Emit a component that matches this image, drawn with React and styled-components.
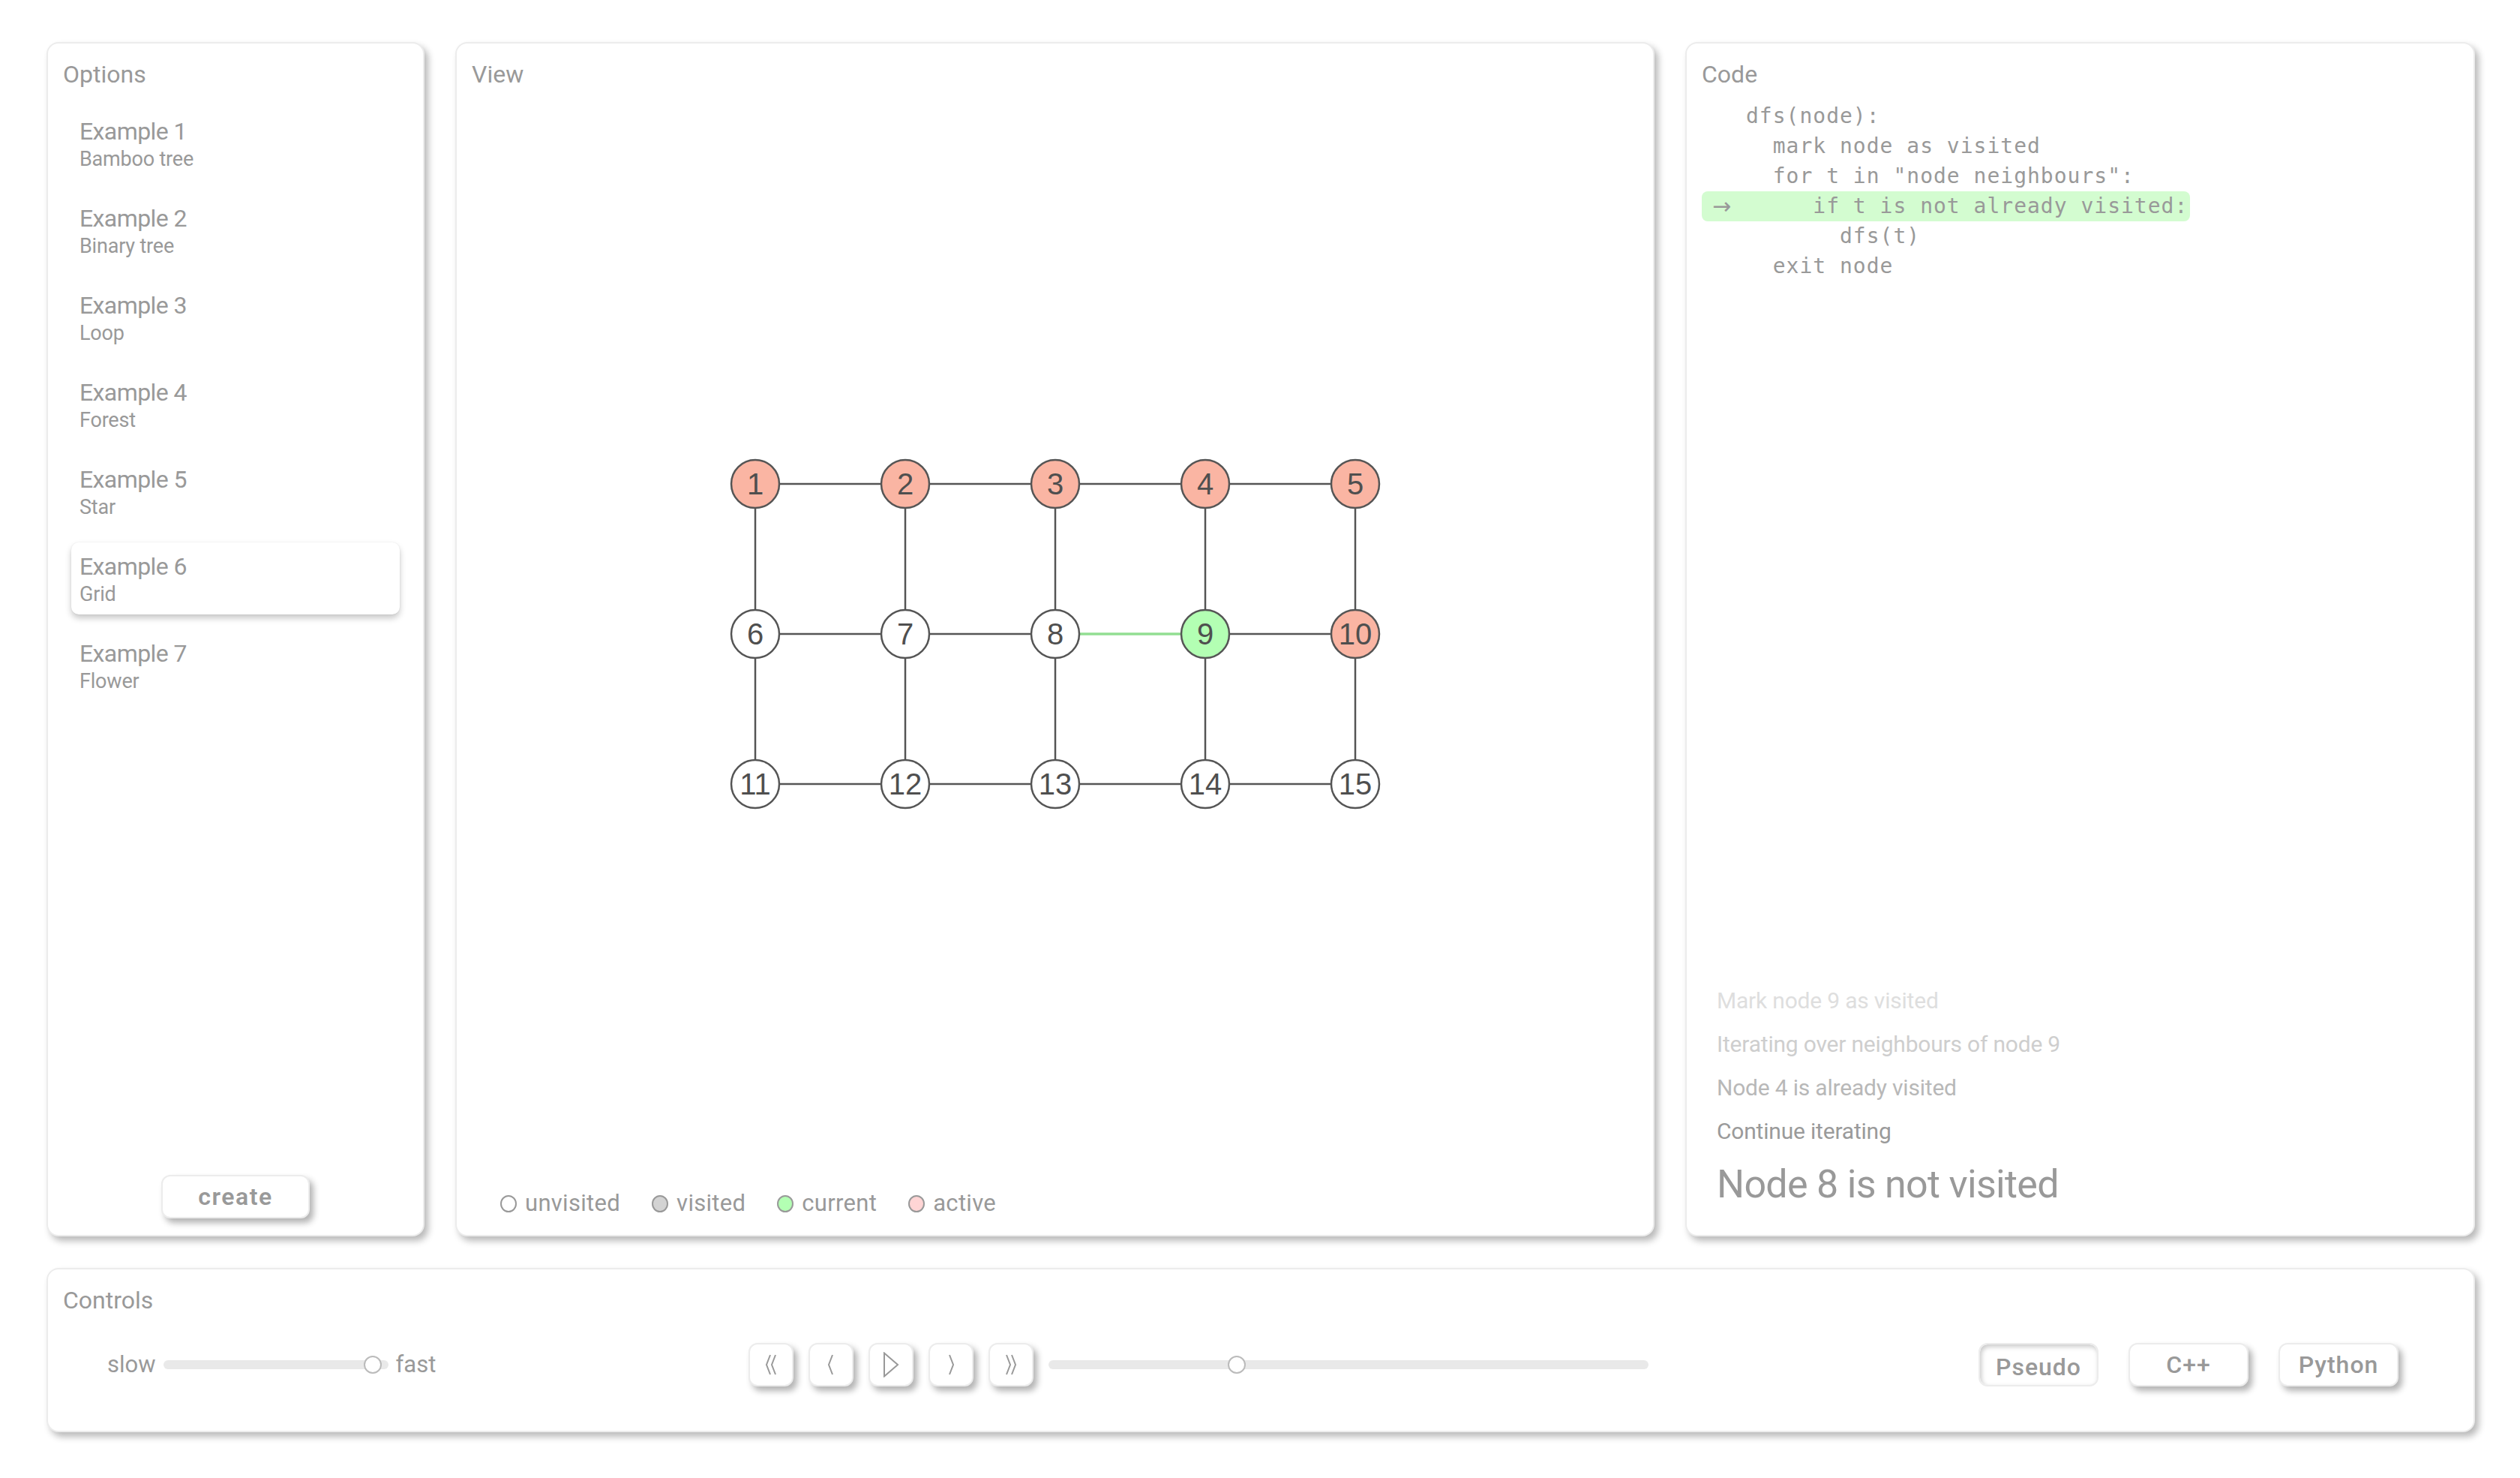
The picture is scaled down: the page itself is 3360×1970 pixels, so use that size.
import React from 'react'
import styled, { createGlobalStyle, css } from 'styled-components'

const GlobalStyle = createGlobalStyle`
  html, body {
    margin: 0;
    padding: 0;
    background: #fff;
  }
  body {
    font-family: Roboto, "Noto Sans", sans-serif;
    color: #999;
  }
`

const Page = styled.div`
  box-sizing: border-box;
  width: 3360px;
  height: 1970px;
  padding: 56px 60px 61px 62px;
  display: flex;
  flex-direction: column;
  gap: 42px;
`

const TopRow = styled.div`
  display: grid;
  grid-template-columns: 504px 1599px 1fr;
  gap: 41px;
  height: 1592px;
  flex: none;
`

const Panel = styled.section`
  box-sizing: border-box;
  background: #fff;
  border: 2px solid #ececec;
  border-radius: 16px;
  box-shadow: 5px 6px 10px rgba(0, 0, 0, 0.28);
  padding: 22px 20px ${p => p.$bottom || 22}px;
  display: flex;
  flex-direction: column;
  min-height: 0;
`

const ControlsPanel = styled(Panel)`
  flex: 1;
`

const PanelTitle = styled.h2`
  margin: 0;
  font-size: 32px;
  line-height: 38px;
  font-weight: 400;
  color: #999;
`

/* options */
const ExampleList = styled.ul`
  list-style: none;
  margin: 25px 0 0;
  padding: 0 11px;
  display: flex;
  flex-direction: column;
  gap: 20px;
  flex: 1;
`

const ExampleItem = styled.li`
  padding: 12px 11px 10px;
  border-radius: 10px;
  color: #999;
  ${p => p.$active && css`
    box-shadow: 0 0 2px rgba(0, 0, 0, 0.08), 0 5px 8px rgba(0, 0, 0, 0.22);
  `}
`

const ExampleName = styled.div`
  font-size: 32px;
  line-height: 40px;
  letter-spacing: -0.6px;
`

const ExampleSub = styled.div`
  font-size: 27px;
  line-height: 34px;
  letter-spacing: -0.2px;
`

const RaisedButton = styled.button`
  box-sizing: border-box;
  background: #fff;
  border: 2px solid #ececec;
  border-radius: 12px;
  font-family: Roboto, "Noto Sans", sans-serif;
  color: #999;
  padding: 0;
  cursor: pointer;
  display: flex;
  align-items: center;
  justify-content: center;
  box-shadow: ${p => p.$pressed
    ? 'inset 2px 3px 6px rgba(0, 0, 0, 0.22)'
    : '5px 6px 8px rgba(0, 0, 0, 0.3)'};
`

const CreateButton = styled(RaisedButton)`
  align-self: center;
  width: 198px;
  height: 58px;
  font-size: 32px;
  font-weight: 600;
  letter-spacing: 1.5px;
`

/* view */
const GraphArea = styled.div`
  flex: 1;
  display: flex;
  align-items: center;
  justify-content: center;
  padding-bottom: 14px;
`

const Legend = styled.div`
  display: flex;
  align-items: center;
  gap: 42px;
  padding-left: 38px;
`

const LegendItem = styled.div`
  display: flex;
  align-items: center;
  gap: 11px;
  font-size: 31px;
  line-height: 36px;
  letter-spacing: 0.3px;
  color: #999;
`

const Dot = styled.span`
  box-sizing: border-box;
  width: 22px;
  height: 23px;
  border-radius: 50%;
  border: 2px solid #999;
  background: ${p => p.$color};
`

/* code */
const CodeBlock = styled.div`
  margin-top: 17px;
  display: flex;
  flex-direction: column;
  font-family: "DejaVu Sans Mono", "Liberation Mono", monospace;
  font-size: 28px;
  line-height: 40px;
  letter-spacing: 1px;
  color: #999;
`

const CodeLine = styled.div`
  display: flex;
  width: fit-content;
  padding: 0 3px 0 14px;
  border-radius: 8px;
  background: ${p => (p.$current ? '#d3fcd0' : 'transparent')};
`

const Marker = styled.span`
  width: 45px;
  flex: none;
  font-family: "DejaVu Sans", sans-serif;
  font-size: 30px;
  letter-spacing: 0;
`

const CodeText = styled.span`
  white-space: pre;
`

const Log = styled.div`
  margin-top: auto;
  padding: 0 20px 14px;
  display: flex;
  flex-direction: column;
`

const LogLine = styled.div`
  font-size: 30px;
  line-height: 58px;
  letter-spacing: -0.2px;
  color: ${p => p.$color};
`

const LogCurrent = styled.div`
  margin-top: 11px;
  font-size: 52px;
  line-height: 62px;
  letter-spacing: -0.7px;
  color: #999;
`

/* controls */
const ControlRow = styled.div`
  flex: 1;
  display: flex;
  align-items: center;
`

const SpeedGroup = styled.div`
  box-sizing: border-box;
  width: 914px;
  padding-left: 59px;
  display: flex;
  align-items: center;
  gap: 10px;
  font-size: 31px;
  color: #999;
`

const Track = styled.div`
  position: relative;
  width: ${p => p.$width}px;
  height: 12px;
  border-radius: 6px;
  background: #e9e9e9;
`

const Thumb = styled.span`
  position: absolute;
  top: -6px;
  box-sizing: border-box;
  width: 24px;
  height: 24px;
  border-radius: 50%;
  background: #fff;
  border: 2px solid #bbb;
`

const PlaybackGroup = styled.div`
  display: flex;
  align-items: center;
  gap: 20px;
`

const IconButton = styled(RaisedButton)`
  width: 60px;
  height: 58px;
`

const LangGroup = styled.div`
  margin-left: auto;
  margin-right: 80px;
  display: flex;
  gap: 40px;
`

const LangButton = styled(RaisedButton)`
  width: 160px;
  height: 58px;
  font-size: 32px;
  font-weight: 500;
  letter-spacing: 1px;
  padding-top: ${p => (p.$pressed ? 6 : 0)}px;
`

const examples = [
  ['Example 1', 'Bamboo tree'],
  ['Example 2', 'Binary tree'],
  ['Example 3', 'Loop'],
  ['Example 4', 'Forest'],
  ['Example 5', 'Star'],
  ['Example 6', 'Grid'],
  ['Example 7', 'Flower'],
]

const codeLines = [
  'dfs(node):',
  '  mark node as visited',
  '  for t in "node neighbours":',
  '     if t is not already visited:',
  '       dfs(t)',
  '  exit node',
]

const fills = { unvisited: '#fff', active: '#fab5a3', current: '#b3ffb3' }
const stateOf = n => (n === 9 ? 'current' : n <= 5 || n === 10 ? 'active' : 'unvisited')

const pos = n => {
  const i = n - 1
  return { x: 35 + (i % 5) * 200, y: 35 + Math.floor(i / 5) * 200 }
}

const edges = []
for (let n = 1; n <= 15; n++) {
  if (n % 5 !== 0) edges.push([n, n + 1])
  if (n <= 10) edges.push([n, n + 5])
}

const Graph = () => (
  <svg width="870" height="470" viewBox="0 0 870 470">
    {edges.map(([a, b]) => {
      const p = pos(a)
      const q = pos(b)
      const green = a === 8 && b === 9
      return (
        <line key={a + '-' + b} x1={p.x} y1={p.y} x2={q.x} y2={q.y}
          stroke={green ? '#92de92' : '#555'} strokeWidth={green ? 3.5 : 2.5} />
      )
    })}
    {Array.from({ length: 15 }, (_, k) => k + 1).map(n => {
      const p = pos(n)
      return (
        <g key={n}>
          <circle cx={p.x} cy={p.y} r="32" fill={fills[stateOf(n)]} stroke="#555" strokeWidth="2.5" />
          <text x={p.x} y={p.y + 14} textAnchor="middle" fontSize="40"
            fontFamily='"Liberation Sans", Arial, sans-serif' fill="#4f4f4f">{n}</text>
        </g>
      )
    })}
  </svg>
)

const Icon = ({ children, w = 24 }) => (
  <svg width={w} height="34" viewBox={`0 0 ${w} 34`} fill="none" stroke="#999" strokeWidth="2" strokeLinejoin="miter">
    {children}
  </svg>
)

export default function App() {
  return (
    <>
      <GlobalStyle />
      <Page>
        <TopRow>
          <Panel>
            <PanelTitle>Options</PanelTitle>
            <ExampleList>
              {examples.map(([name, sub], i) => (
                <ExampleItem key={name} $active={i === 5}>
                  <ExampleName>{name}</ExampleName>
                  <ExampleSub>{sub}</ExampleSub>
                </ExampleItem>
              ))}
            </ExampleList>
            <CreateButton>create</CreateButton>
          </Panel>

          <Panel $bottom={24}>
            <PanelTitle>View</PanelTitle>
            <GraphArea>
              <Graph />
            </GraphArea>
            <Legend>
              <LegendItem><Dot $color="#fff" />unvisited</LegendItem>
              <LegendItem><Dot $color="#d3d3d3" />visited</LegendItem>
              <LegendItem><Dot $color="#b3ffb3" />current</LegendItem>
              <LegendItem><Dot $color="#ffd5d5" />active</LegendItem>
            </Legend>
          </Panel>

          <Panel>
            <PanelTitle>Code</PanelTitle>
            <CodeBlock>
              {codeLines.map((line, i) => (
                <CodeLine key={i} $current={i === 3}>
                  <Marker>{i === 3 ? '→' : ''}</Marker>
                  <CodeText>{line}</CodeText>
                </CodeLine>
              ))}
            </CodeBlock>
            <Log>
              <LogLine $color="#dedede">Mark node 9 as visited</LogLine>
              <LogLine $color="#cecece">Iterating over neighbours of node 9</LogLine>
              <LogLine $color="#b8b8b8">Node 4 is already visited</LogLine>
              <LogLine $color="#9a9a9a">Continue iterating</LogLine>
              <LogCurrent>Node 8 is not visited</LogCurrent>
            </Log>
          </Panel>
        </TopRow>

        <ControlsPanel>
          <PanelTitle>Controls</PanelTitle>
          <ControlRow>
            <SpeedGroup>
              <span>slow</span>
              <Track $width={300}>
                <Thumb style={{ left: 267 }} />
              </Track>
              <span>fast</span>
            </SpeedGroup>

            <PlaybackGroup>
              <IconButton>
                <Icon><path d="M11 4 L6 17 L11 30 M18 4 L13 17 L18 30" /></Icon>
              </IconButton>
              <IconButton>
                <Icon><path d="M14 4 L9 17 L14 30" /></Icon>
              </IconButton>
              <IconButton>
                <Icon><path d="M3 1.5 L21 17 L3 32.5 Z" /></Icon>
              </IconButton>
              <IconButton>
                <Icon><path d="M10 4 L15 17 L10 30" /></Icon>
              </IconButton>
              <IconButton>
                <Icon><path d="M6 4 L11 17 L6 30 M13 4 L18 17 L13 30" /></Icon>
              </IconButton>
              <Track $width={800}>
                <Thumb style={{ left: 239 }} />
              </Track>
            </PlaybackGroup>

            <LangGroup>
              <LangButton $pressed>Pseudo</LangButton>
              <LangButton>C++</LangButton>
              <LangButton>Python</LangButton>
            </LangGroup>
          </ControlRow>
        </ControlsPanel>
      </Page>
    </>
  )
}
